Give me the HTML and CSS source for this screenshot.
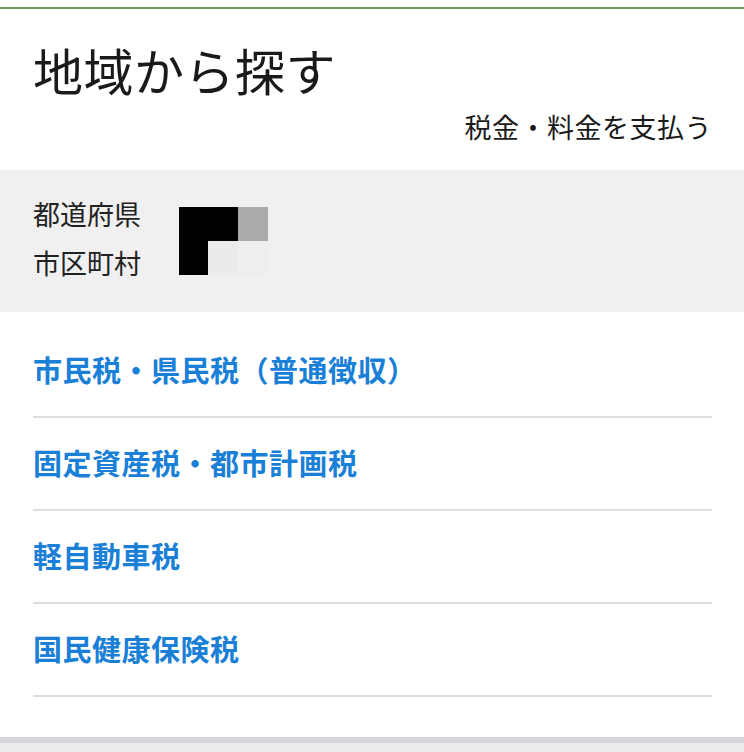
FILE: index.html
```html
<!DOCTYPE html>
<html lang="ja">

<head>
  <meta charset="UTF-8">
  <meta name="viewport" content="width=device-width, initial-scale=1.0">
  <title>地域から探す</title>
  <link rel="stylesheet" href="styles.css">
</head>

<body>
  <div class="top-line"></div>

  <header class="page-head">
    <h1 class="title">地域から探す</h1>
    <p class="subtitle">税金・料金を支払う</p>
  </header>

  <section class="region">
    <div class="region-labels">
      <div class="region-label">都道府県</div>
      <div class="region-label">市区町村</div>
    </div>
    <!-- masked area -->
    <div class="mask">
      <span class="cell black"></span>
      <span class="cell black"></span>
      <span class="cell grey"></span>
      <span class="cell black"></span>
      <span class="cell light"></span>
      <span class="cell lighter"></span>
    </div>
  </section>

  <ul class="tax-list">
    <li class="tax-item"><a href="#">市民税・県民税（普通徴収）</a></li>
    <li class="tax-item"><a href="#">固定資産税・都市計画税</a></li>
    <li class="tax-item"><a href="#">軽自動車税</a></li>
    <li class="tax-item"><a href="#">国民健康保険税</a></li>
  </ul>

  <footer class="bottom-bar"></footer>
</body>

</html>
```

FILE: styles.css
```css
/* Base */
body {
  margin: 0;
  padding-top: 7px;
  background: #fff;
  color: #1a1a1a;
  font-family: "Noto Sans CJK JP", "Noto Sans", sans-serif;
  width: 744px;
  height: 752px;
  overflow: hidden;
  box-sizing: border-box;
  display: flex;
  flex-direction: column;
}

.top-line {
  height: 2px;
  background: #6a9a5c;
}

/* Header */
.page-head {
  padding: 0 32px 0 33px;
  height: 161px;
  box-sizing: border-box;
}

.title {
  margin: 0;
  padding-top: 35px;
  font-size: 50px;
  font-weight: 400;
  line-height: 1;
  letter-spacing: 0.5px;
}

.subtitle {
  margin: 19px 0 0;
  font-size: 27px;
  line-height: 1;
  text-align: right;
  letter-spacing: 0.5px;
}

/* Region band */
.region {
  background: #f0f0f0;
  height: 142px;
  padding: 0 33px;
  display: flex;
  align-items: center;
  box-sizing: border-box;
}

.region-labels {
  display: flex;
  flex-direction: column;
  gap: 22px;
  padding-bottom: 6px;
}

.region-label {
  font-size: 27px;
  line-height: 27px;
  color: #222;
  width: 112px;
}

.mask {
  margin-left: 34px;
  display: grid;
  grid-template-columns: 29px 30px 30px;
  grid-template-rows: 34px 34px;
}

.cell.black { background: #000; }
.cell.grey { background: #aaa; }
.cell.light { background: #ebebeb; }
.cell.lighter { background: #eeeeee; }

.mask .cell:nth-child(1) { grid-column: 1; grid-row: 1; }
.mask .cell:nth-child(2) { grid-column: 2; grid-row: 1; }
.mask .cell:nth-child(3) { grid-column: 3; grid-row: 1; }
.mask .cell:nth-child(4) { grid-column: 1; grid-row: 2; }
.mask .cell:nth-child(5) { grid-column: 2; grid-row: 2; }
.mask .cell:nth-child(6) { grid-column: 3; grid-row: 2; }

/* Tax list */
.tax-list {
  list-style: none;
  margin: 0;
  padding: 13px 32px 0 33px;
}

.tax-item {
  border-bottom: 2px solid #dedede;
}

.tax-item a {
  display: block;
  padding: 29px 0 32px;
  font-size: 29px;
  line-height: 30px;
  font-weight: 700;
  letter-spacing: 0.5px;
  color: #1a7fd6;
  text-decoration: none;
}

/* Bottom */
.bottom-bar {
  margin-top: auto;
  height: 15px;
  border-top: 6px solid #d6d4dc;
  background: #ececee;
  box-sizing: border-box;
}
```
